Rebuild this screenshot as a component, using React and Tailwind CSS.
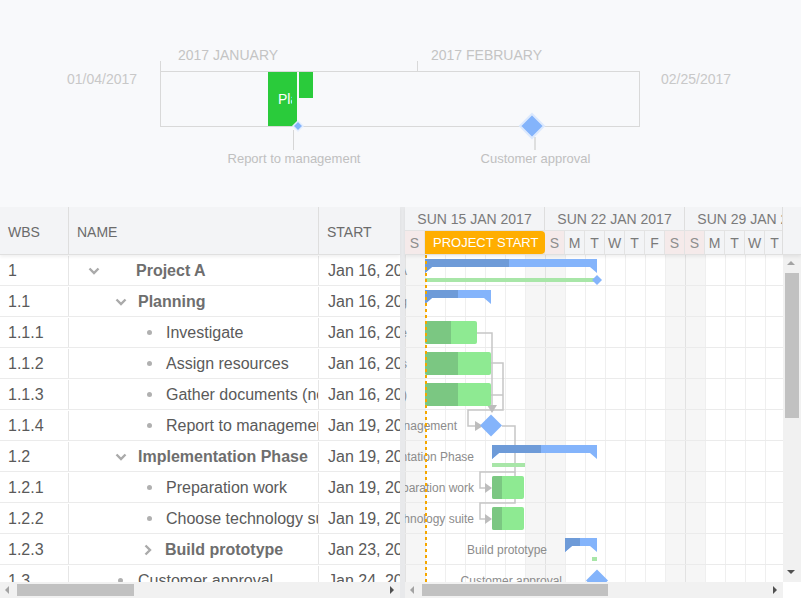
import React from 'react';

const rows = [
  { wbs: '1', name: 'Project A', start: 'Jan 16, 2017', icon: 'down', pad: 'pl-[19px]', gap: 'ml-[36px]', bold: true },
  { wbs: '1.1', name: 'Planning', start: 'Jan 16, 2017', icon: 'down', pad: 'pl-[46px]', gap: 'ml-[11px]', bold: true },
  { wbs: '1.1.1', name: 'Investigate', start: 'Jan 16, 2017', icon: 'dot', pad: 'pl-[78px]', gap: 'ml-[14px]' },
  { wbs: '1.1.2', name: 'Assign resources', start: 'Jan 16, 2017', icon: 'dot', pad: 'pl-[78px]', gap: 'ml-[14px]' },
  { wbs: '1.1.3', name: 'Gather documents (not mandatory)', start: 'Jan 16, 2017', icon: 'dot', pad: 'pl-[78px]', gap: 'ml-[14px]' },
  { wbs: '1.1.4', name: 'Report to management', start: 'Jan 19, 2017', icon: 'dot', pad: 'pl-[78px]', gap: 'ml-[14px]' },
  { wbs: '1.2', name: 'Implementation Phase', start: 'Jan 19, 2017', icon: 'down', pad: 'pl-[46px]', gap: 'ml-[11px]', bold: true },
  { wbs: '1.2.1', name: 'Preparation work', start: 'Jan 19, 2017', icon: 'dot', pad: 'pl-[78px]', gap: 'ml-[14px]' },
  { wbs: '1.2.2', name: 'Choose technology suite', start: 'Jan 19, 2017', icon: 'dot', pad: 'pl-[78px]', gap: 'ml-[14px]' },
  { wbs: '1.2.3', name: 'Build prototype', start: 'Jan 23, 2017', icon: 'right', pad: 'pl-[75px]', gap: 'ml-[13px]', bold: true },
  { wbs: '1.3', name: 'Customer approval', start: 'Jan 24, 2017', icon: 'dot', pad: 'pl-[49px]', gap: 'ml-[15px]' },
];

const dayLetters = ['S', 'M', 'T', 'W', 'T', 'F', 'S'];
const days = Array.from({ length: 19 }, (_, k) => ({ k, letter: dayLetters[k % 7], weekend: k % 7 === 0 || k % 7 === 6 }));
const weeks = ['SUN 15 JAN 2017', 'SUN 22 JAN 2017', 'SUN 29 JAN 2017'];

const RowIcon = ({ icon }) => {
  if (icon === 'down') {
    return (
      <svg width="12" height="8" viewBox="0 0 12 8" className="shrink-0">
        <polyline points="1.5,1.5 6,6 10.5,1.5" fill="none" stroke="#aaaaaa" strokeWidth="2.4" />
      </svg>
    );
  }
  if (icon === 'right') {
    return (
      <svg width="8" height="12" viewBox="0 0 8 12" className="shrink-0">
        <polyline points="1.5,1.5 6,6 1.5,10.5" fill="none" stroke="#aaaaaa" strokeWidth="2.4" />
      </svg>
    );
  }
  return <span className="w-[5px] h-[5px] rounded-full bg-[#b0b0b0] shrink-0" />;
};

const Summary = ({ x1, x2, xd, y }) => {
  const t = y + 4;
  const b = y + 12;
  const c = y + 18;
  return (
    <g>
      <polygon points={`${x1},${t} ${x2},${t} ${x2},${c} ${x2 - 7},${b} ${x1 + 7},${b} ${x1},${c}`} fill="#84b4fb" />
      <polygon points={`${x1},${t} ${xd},${t} ${xd},${b} ${x1 + 7},${b} ${x1},${c}`} fill="#6e9bd8" />
    </g>
  );
};

const Task = ({ x1, x2, xd, y }) => (
  <g>
    <rect x={x1} y={y + 4} width={x2 - x1} height={23} rx={2} fill="#8eea92" />
    <rect x={x1} y={y + 4} width={xd - x1} height={23} rx={2} fill="#7bc782" />
    <rect x={xd - 3} y={y + 4} width={3} height={23} fill="#7bc782" />
  </g>
);

const Diamond = ({ cx, cy, h }) => (
  <polygon points={`${cx},${cy - h} ${cx + h},${cy} ${cx},${cy + h} ${cx - h},${cy}`} fill="#84b4fb" />
);

const Label = ({ x, y, children }) => (
  <text x={x} y={y} textAnchor="end" fontSize="12" fill="#8c8c8c">{children}</text>
);

const ChartBody = () => (
  <svg width="378" height="327" className="block">
    {days.map((d) =>
      d.weekend ? <rect key={'w' + d.k} x={d.k * 20} y={0} width={20} height={327} fill="#f6f6f6" /> : null
    )}
    {days.map((d) => (
      <line key={'v' + d.k} x1={d.k * 20 + 0.5} x2={d.k * 20 + 0.5} y1={0} y2={327} stroke={d.k % 7 === 0 ? '#e2e2e2' : '#efefef'} />
    ))}
    {rows.map((r, i) => (
      <line key={'h' + i} x1={0} x2={378} y1={31 * (i + 1) - 0.5} y2={31 * (i + 1) - 0.5} stroke="#ebebeb" />
    ))}

    {/* connectors */}
    <g fill="none" stroke="#c6c6c6" strokeWidth="1.5">
      <path d="M72,78 H87 V151" />
      <path d="M86,108 H98 V155 H63 V171 H71" />
      <path d="M86,140 H98" />
      <path d="M97,171 H110 V217 H75 V233 H81" />
      <path d="M110,217 V248 H75 V264 H81" />
    </g>
    <g fill="#bdbdbd">
      <polygon points="82,150 92,150 87,158" />
      <polygon points="70,166 70,176 78,171" />
      <polygon points="80,228 80,238 87,233" />
      <polygon points="80,259 80,269 87,264" />
    </g>

    {/* bars */}
    <Summary x1={20} x2={192} xd={104} y={0} />
    <rect x={20} y={23} width={172} height={4} fill="#a8e6a8" />
    <Diamond cx={192} cy={25} h={5} />
    <Summary x1={20} x2={86} xd={53} y={31} />
    <Task x1={20} x2={72} xd={46} y={62} />
    <Task x1={20} x2={86} xd={53} y={93} />
    <Task x1={20} x2={86} xd={53} y={124} />
    <Diamond cx={86} cy={170.5} h={11} />
    <Summary x1={87} x2={192} xd={136} y={186} />
    <rect x={87} y={208} width={33} height={4} fill="#a8e6a8" />
    <Task x1={87} x2={119} xd={97} y={217} />
    <Task x1={87} x2={119} xd={97} y={248} />
    <Summary x1={160} x2={192} xd={175} y={279} />
    <rect x={187} y={302} width={5} height={4} fill="#a8e6a8" />
    <Diamond cx={192} cy={325.5} h={11} />

    {/* labels */}
    <Label x={2} y={20}>Project A</Label>
    <Label x={2} y={51}>Planning</Label>
    <Label x={2} y={82}>Investigate</Label>
    <Label x={2} y={113}>Assign resources</Label>
    <Label x={2} y={144}>Gather documents (not mandatory)</Label>
    <Label x={52} y={175}>Report to management</Label>
    <Label x={69} y={206}>Implementation Phase</Label>
    <Label x={69} y={237}>Preparation work</Label>
    <Label x={69} y={268}>Choose technology suite</Label>
    <Label x={142} y={299}>Build prototype</Label>
    <Label x={157} y={330}>Customer approval</Label>

    {/* project start line */}
    <line x1={21} x2={21} y1={0} y2={327} stroke="#f5a700" strokeWidth="2" strokeDasharray="3 3" />
  </svg>
);

const Overview = () => (
  <svg width="801" height="207" className="block">
    <defs>
      <clipPath id="plclip">
        <rect x="268" y="72" width="24" height="54" />
      </clipPath>
    </defs>
    <text x="178" y="60" fontSize="14" fill="#c4c4c4">2017 JANUARY</text>
    <text x="431" y="60" fontSize="14" fill="#c4c4c4">2017 FEBRUARY</text>
    <text x="67" y="84" fontSize="14" fill="#c8c8c8">01/04/2017</text>
    <text x="661" y="84" fontSize="14" fill="#c8c8c8">02/25/2017</text>
    <rect x="160.5" y="71.5" width="479" height="55" fill="none" stroke="#d9d9d9" />
    <line x1="160.5" x2="160.5" y1="61" y2="71" stroke="#d9d9d9" />
    <line x1="417.5" x2="417.5" y1="61" y2="71" stroke="#d9d9d9" />
    <rect x="268" y="72" width="29" height="54" fill="#2acb3b" />
    <text x="278" y="104" fontSize="14" fill="#ffffff" clipPath="url(#plclip)">Planning</text>
    <rect x="299" y="72" width="14" height="26" fill="#2acb3b" />
    <line x1="293.5" x2="293.5" y1="130" y2="150" stroke="#d6d6d6" />
    <polygon points="298,121 303,126 298,131 293,126" fill="#84b4fb" stroke="#e4eeff" strokeWidth="1.5" />
    <text x="294" y="163" fontSize="13" fill="#c0c0c0" textAnchor="middle">Report to management</text>
    <line x1="535" x2="535" y1="137" y2="150" stroke="#d6d6d6" strokeWidth="1.5" />
    <polygon points="532,114 544,126 532,138 520,126" fill="#84b4fb" stroke="#dce9fd" strokeWidth="2" />
    <text x="535.5" y="163" fontSize="13" fill="#c0c0c0" textAnchor="middle">Customer approval</text>
  </svg>
);

const HScroll = ({ thumbLeft, thumbWidth }) => (
  <div className="h-[16px] bg-[#f1f1f1] relative">
    <svg width="6" height="8" className="absolute left-[4px] top-[4px]">
      <polygon points="5,0 5,8 1,4" fill="#a3a3a3" />
    </svg>
    <div className={`absolute top-[2px] h-[12px] bg-[#c1c1c1] ${thumbLeft} ${thumbWidth}`} />
    <svg width="6" height="8" className="absolute right-[5px] top-[4px]">
      <polygon points="1,0 1,8 5,4" fill="#505050" />
    </svg>
  </div>
);

export default function App() {
  return (
    <div className="w-[801px] h-[598px] overflow-hidden flex flex-col bg-[#f8f9fb] font-['Liberation_Sans',Arial,sans-serif]">
      <Overview />
      <div className="flex h-[391px] bg-white">
        {/* grid */}
        <div className="w-[400px] flex flex-col">
          <div className="h-[48px] flex bg-[#f3f4f6] text-[14px] text-[#6b6b6b] border-b border-[#e0e0e0] shadow-[0_2px_3px_rgba(0,0,0,0.06)] relative z-10">
            <div className="w-[69px] flex items-center pl-[8px] pt-[3px] border-r border-[#dedede]">WBS</div>
            <div className="w-[250px] flex items-center pl-[8px] pt-[3px] border-r border-[#dedede]">NAME</div>
            <div className="w-[81px] flex items-center pl-[8px] pt-[3px]">START</div>
          </div>
          <div className="h-[327px] overflow-hidden text-[16px] text-[#5a5a5a]">
            {rows.map((r) => (
              <div key={r.wbs} className="h-[31px] flex border-b border-[#ebebeb] pt-[1px]">
                <div className="w-[69px] shrink-0 flex items-center pl-[8px] border-r border-[#e6e6e6]">{r.wbs}</div>
                <div className={`w-[250px] shrink-0 flex items-center overflow-hidden whitespace-nowrap border-r border-[#e6e6e6] ${r.pad}`}>
                  <RowIcon icon={r.icon} />
                  <span className={`${r.gap} ${r.bold ? 'font-bold text-[#6e6e6e]' : ''}`}>{r.name}</span>
                </div>
                <div className="w-[81px] shrink-0 flex items-center pl-[9px] overflow-hidden whitespace-nowrap">{r.start}</div>
              </div>
            ))}
          </div>
          <HScroll thumbLeft="left-[17px]" thumbWidth="w-[117px]" />
        </div>

        {/* splitter */}
        <div className="w-[5px] bg-[#e8e9eb]" />

        {/* chart */}
        <div className="w-[396px] flex flex-col">
          <div className="h-[48px] bg-[#f3f4f6] flex border-b border-[#e0e0e0] shadow-[0_2px_3px_rgba(0,0,0,0.06)] relative z-10">
            <div className="w-[378px] overflow-hidden border-r border-[#dedede] relative">
              <div className="flex h-[24px] border-b border-[#e3e3e3] w-[420px]">
                {weeks.map((w) => (
                  <div key={w} className="w-[140px] shrink-0 flex items-center justify-center pt-[2px] text-[14px] text-[#7a7a7a] whitespace-nowrap border-r border-[#dedede]">
                    {w}
                  </div>
                ))}
              </div>
              <div className="flex h-[23px] w-[380px]">
                {days.map((d) => (
                  <div
                    key={d.k}
                    className={`w-[20px] shrink-0 flex items-center justify-center pt-[1px] text-[14px] border-r border-[#e3e3e3] ${d.weekend ? 'bg-[#f5eaea] text-[#8e8e8e]' : 'text-[#7a7a7a]'}`}
                  >
                    {d.letter}
                  </div>
                ))}
              </div>
              <div className="absolute left-[20px] top-[24px] w-[120px] h-[23px] bg-[#ffae00] rounded-r-[4px] text-white text-[13px] flex items-center pl-[8px] pt-[1px] whitespace-nowrap">
                PROJECT START
              </div>
            </div>
          </div>
          <div className="flex h-[327px]">
            <div className="w-[378px] overflow-hidden">
              <ChartBody />
            </div>
            <div className="w-[18px] bg-[#f1f1f1] relative">
              <svg width="8" height="6" className="absolute left-[4px] top-[5px]">
                <polygon points="0,5 8,5 4,1" fill="#a3a3a3" />
              </svg>
              <div className="absolute left-[2px] top-[18px] w-[14px] h-[145px] bg-[#c1c1c1]" />
              <svg width="8" height="6" className="absolute left-[4px] bottom-[7px]">
                <polygon points="0,1 8,1 4,5" fill="#505050" />
              </svg>
            </div>
          </div>
          <div className="flex">
            <div className="w-[378px]">
              <HScroll thumbLeft="left-[17px]" thumbWidth="w-[186px]" />
            </div>
            <div className="w-[18px] h-[16px] bg-white" />
          </div>
        </div>
      </div>
    </div>
  );
}
